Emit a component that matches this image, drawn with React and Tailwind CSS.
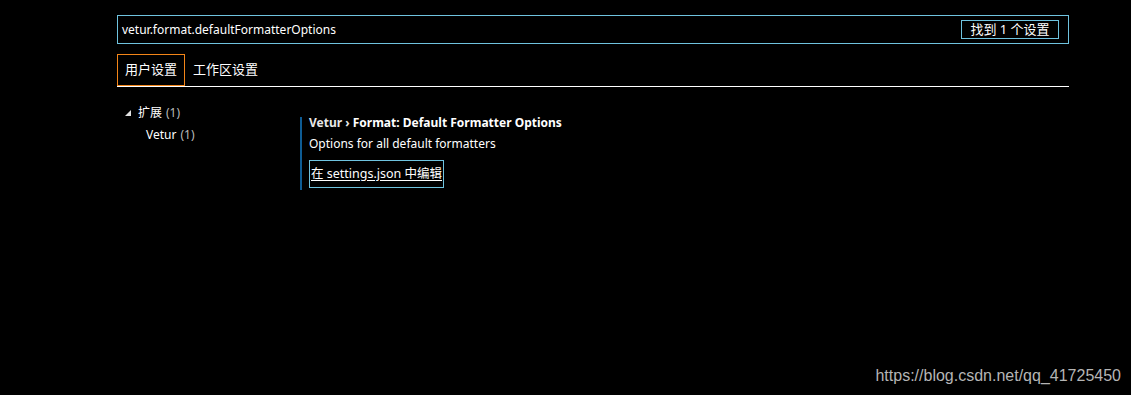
import React from "react";

export default function App() {
  return (
    <div
      className="relative w-full h-[395px] bg-black text-white overflow-hidden"
      style={{ fontFamily: '"Noto Sans", "Noto Sans CJK SC", sans-serif' }}
    >
      <div className="w-[952px] ml-[117px] pt-[15px]">
        {/* Search box */}
        <div className="h-[29px] border border-[#6fc3df] flex items-center justify-between pl-[4px] pr-[9px]">
          <span className="text-[12px] leading-none text-white">vetur.format.defaultFormatterOptions</span>
          <span className="h-[19px] w-[98px] border border-[#6fc3df] flex items-center justify-center text-[13px] leading-none text-white">
            找到 1 个设置
          </span>
        </div>

        {/* Tabs */}
        <div className="mt-[10px] flex items-end border-b border-white">
          <div className="h-[32px] w-[68px] border border-[#f38518] flex items-center justify-center text-[13px] text-white">
            用户设置
          </div>
          <div className="h-[32px] px-[8px] flex items-center text-[13px] text-white">工作区设置</div>
        </div>

        {/* Body */}
        <div className="flex mt-[15px]">
          <div className="w-[183px] text-[12px] leading-[22px]">
            <div className="flex items-center">
              <span className="w-[21px] flex justify-center">
                <svg width="6" height="6" viewBox="0 0 6 6">
                  <path d="M6 0 L6 6 L0 6 Z" fill="#e0e0e0" />
                </svg>
              </span>
              <span className="text-white">扩展</span>
              <span className="ml-[4px] text-[#bbbbbb]">(1)</span>
            </div>
            <div className="pl-[29px]">
              <span className="text-white">Vetur</span>
              <span className="ml-[4px] text-[#bbbbbb]">(1)</span>
            </div>
          </div>

          <div className="mt-[15px] border-l-2 border-[#0e5c94] pl-[7px] h-[73px]">
            <div className="text-[12px] leading-[14px] mt-[-1px]">
              <span className="font-bold text-[#e8e8e8]">Vetur › </span>
              <span className="font-bold text-white">Format: Default Formatter Options</span>
            </div>
            <div className="text-[12px] leading-[14px] mt-[7px] text-white">Options for all default formatters</div>
            <div className="mt-[9px] inline-flex h-[28px] px-[1px] items-center border border-[#6fc3df] text-[12.5px] text-white underline underline-offset-2">
              在 settings.json 中编辑
            </div>
          </div>
        </div>
      </div>

      <div
        className="absolute right-[10px] bottom-[7px] text-[16px] text-[#b5b5b5]"
        style={{ fontFamily: '"Liberation Sans", Arial, sans-serif' }}
      >
        https://blog.csdn.net/qq_41725450
      </div>
    </div>
  );
}
